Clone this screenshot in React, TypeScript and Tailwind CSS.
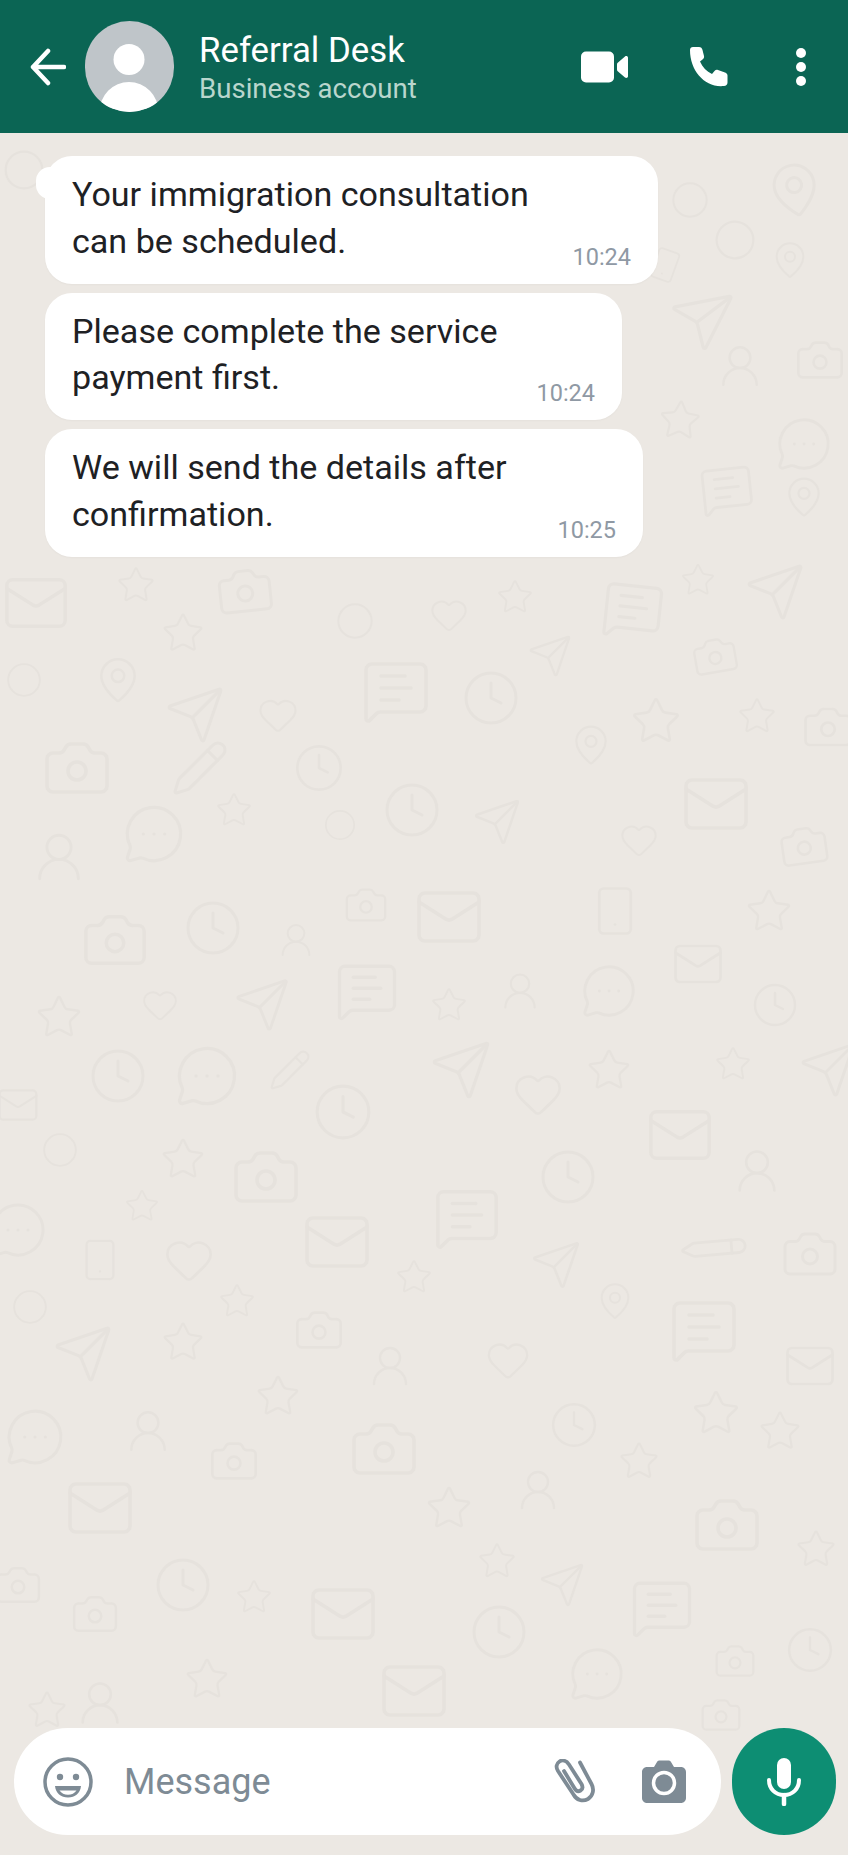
import React from 'react';
import { Camera, Clock, Heart, Mail, MapPin, MessageCircleMore, MessageSquareText, Pencil, Send, Smartphone, Star, UserRound, Circle } from 'lucide-react';

const FONT = 'font-["Roboto","Noto_Sans",sans-serif]';

const ICONS: Record<string, React.ComponentType<any>> = {
  star: Star,
  mail: Mail,
  send: Send,
  clock: Clock,
  heart: Heart,
  cam: Camera,
  dots: MessageCircleMore,
  chat: MessageSquareText,
  pin: MapPin,
  user: UserRound,
  phone: Smartphone,
  pen: Pencil,
  blob: Circle,
};

// doodles of the wallpaper: icon, x, y, size, rotation (centre coords in px)
const DOODLES: [string, number, number, number, number][] = [
  ['blob', 24, 170, 44, 0], ['pin', 795, 190, 60, -10], ['blob', 690, 200, 40, 0], ['blob', 735, 240, 44, 8], ['pin', 790, 260, 40, 0],
  ['phone', 665, 265, 36, 20], ['send', 700, 320, 66, 8], ['user', 740, 366, 50, 0], ['cam', 820, 360, 52, 0], ['star', 680, 420, 44, 4],
  ['dots', 804, 444, 58, 0], ['chat', 727, 490, 56, -6], ['pin', 804, 497, 44, 0], ['star', 698, 580, 36, 0], ['send', 775, 592, 62, 0],
  ['chat', 633, 610, 64, 6], ['cam', 715, 656, 48, -10], ['star', 656, 721, 52, 0], ['star', 757, 716, 40, 0], ['cam', 828, 727, 54, 0],
  ['mail', 716, 804, 72, 0], ['cam', 804, 846, 52, -8], ['heart', 639, 840, 40, 0], ['star', 769, 911, 48, 0], ['phone', 615, 911, 54, 0],
  ['mail', 698, 964, 54, 0], ['clock', 775, 1005, 48, 0], ['dots', 609, 991, 58, 0], ['user', 520, 991, 44, 0], ['star', 449, 1005, 38, 0],
  ['chat', 367, 991, 66, 0], ['send', 262, 1005, 58, 0], ['heart', 160, 1005, 38, 0], ['star', 59, 1017, 48, 0], ['cam', 115, 940, 70, 0],
  ['clock', 213, 928, 60, 0], ['user', 296, 940, 40, 0], ['cam', 366, 905, 46, 0], ['mail', 449, 917, 72, 0],
  ['mail', 36, 603, 70, 0], ['star', 136, 585, 40, 0], ['cam', 245, 591, 60, -6], ['blob', 355, 621, 40, 0],
  ['heart', 449, 615, 40, 0], ['star', 515, 597, 38, 0], ['star', 183, 633, 44, 0], ['blob', 24, 680, 38, 0], ['pin', 118, 680, 50, 0],
  ['send', 195, 715, 62, 0], ['heart', 278, 715, 42, 0], ['chat', 396, 691, 72, 0], ['clock', 491, 698, 60, 0], ['send', 550, 656, 46, 0],
  ['cam', 77, 768, 72, 0], ['pen', 200, 768, 60, 0], ['clock', 319, 768, 52, 0], ['clock', 412, 810, 60, 0], ['send', 497, 822, 50, 0],
  ['pin', 591, 745, 44, 0], ['dots', 154, 834, 64, 0], ['user', 59, 857, 58, 0], ['star', 234, 810, 38, 0], ['blob', 340, 825, 34, 0],
  ['mail', 18, 1105, 44, 0], ['clock', 118, 1076, 60, 0], ['dots', 207, 1076, 66, 0], ['pen', 290, 1070, 44, 0],
  ['clock', 343, 1112, 62, 0], ['send', 461, 1070, 64, 0], ['heart', 538, 1094, 52, 0], ['star', 609, 1070, 46, 0], ['star', 733, 1064, 38, 0],
  ['send', 828, 1070, 60, 0], ['mail', 680, 1135, 70, 0], ['clock', 568, 1177, 60, 0], ['user', 757, 1171, 52, 0], ['cam', 266, 1177, 72, 0],
  ['star', 183, 1159, 46, 0], ['blob', 60, 1150, 38, 0], ['dots', 18, 1230, 60, 0], ['star', 142, 1206, 36, 0], ['mail', 337, 1242, 72, 0],
  ['chat', 467, 1218, 70, 0], ['phone', 100, 1260, 46, 0], ['heart', 189, 1260, 52, 0], ['blob', 30, 1307, 38, 0], ['star', 414, 1277, 38, 0],
  ['send', 556, 1265, 52, 0], ['pen', 715, 1248, 56, 40], ['cam', 810, 1254, 60, 0], ['send', 83, 1354, 62, 0], ['star', 183, 1342, 44, 0],
  ['cam', 319, 1330, 52, 0], ['star', 237, 1301, 38, 0], ['chat', 704, 1330, 72, 0], ['pin', 615, 1301, 40, 0], ['mail', 810, 1366, 54, 0],
  ['heart', 508, 1360, 46, 0], ['user', 390, 1366, 48, 0], ['star', 278, 1396, 46, 0], ['dots', 35, 1437, 62, 0], ['user', 148, 1431, 50, 0],
  ['cam', 234, 1461, 52, 0], ['cam', 384, 1449, 72, 0], ['clock', 574, 1425, 50, 0], ['star', 716, 1413, 50, 0], ['star', 639, 1461, 42, 0],
  ['star', 780, 1431, 44, 0], ['mail', 100, 1508, 72, 0], ['star', 449, 1508, 48, 0], ['user', 538, 1490, 48, 0], ['cam', 727, 1525, 72, 0],
  ['star', 816, 1549, 42, 0], ['clock', 183, 1585, 60, 0], ['cam', 18, 1585, 50, 0], ['cam', 95, 1614, 50, 0], ['mail', 343, 1614, 72, 0],
  ['star', 254, 1597, 38, 0], ['star', 497, 1561, 40, 0], ['send', 562, 1585, 48, 0], ['chat', 662, 1608, 66, 0], ['clock', 499, 1632, 60, 0],
  ['cam', 735, 1661, 44, 0], ['clock', 810, 1650, 50, 0], ['star', 207, 1679, 46, 0], ['mail', 414, 1691, 72, 0], ['dots', 597, 1674, 58, 0],
  ['user', 100, 1703, 52, 0], ['cam', 721, 1715, 44, 0], ['star', 47, 1710, 42, 0],
];

function Wallpaper() {
  return (
    <svg className="absolute inset-0 w-full h-full" width="848" height="1855" fill="none">
      {DOODLES.map(([name, x, y, size, rot], i) => {
        const Icon = ICONS[name];
        return (
          <g key={i} transform={`rotate(${rot} ${x} ${y})`}>
            <Icon x={x - size / 2} y={y - size / 2} width={size} height={size} color="#e6e2dd" strokeWidth={1.2} />
          </g>
        );
      })}
    </svg>
  );
}

function Header() {
  return (
    <header className="relative z-10 h-[133px] shrink-0 flex items-center bg-[#0b6554] text-white">
      <svg className="ml-[30px] w-[36px] h-[38px]" viewBox="0 0 36 38" fill="none" stroke="white" strokeWidth="4.500" strokeLinecap="round" strokeLinejoin="round">
        <path d="M34 19H3M18 3L3 19l15 16" />
      </svg>
      <div className="ml-[19px] w-[89px] h-[91px] rounded-full bg-[#bfc5c9] overflow-hidden shrink-0">
        <svg viewBox="0 0 89 91" className="w-full h-full" fill="white">
          <circle cx="44" cy="38.500" r="15.500" />
          <ellipse cx="44" cy="91" rx="29.500" ry="30" />
        </svg>
      </div>
      <div className="ml-[25px] flex-1 min-w-0 pt-[2px]">
        <div className="text-[34.800px] leading-[40px] text-white">Referral Desk</div>
        <div className="text-[27.600px] leading-[32px] mt-[3px] text-[#b9d6cd]">Business account</div>
      </div>
      <svg className="w-[47px] h-[32px]" viewBox="0 0 47 32" fill="white">
        <rect x="0" y="0.500" width="33" height="31" rx="5" />
        <path d="M36 13.500c0-.9.3-1.500 1-2l7-6c1.200-.9 3-.3 3 1.300v18.400c0 1.600-1.800 2.200-3 1.300l-7-6c-.7-.5-1-1.100-1-2z" />
      </svg>
      <svg className="ml-[61px] w-[40px] h-[42px]" viewBox="0 0 40 42" fill="white">
        <path d="M4 1h6c2 0 3 1 3.500 3l1.500 6c.3 1.500-.2 2.500-1.500 3.500l-2.500 2c2.500 5.500 6.500 10 12 12.500l2.500-3c1-1.200 2.200-1.500 3.500-1l7 2.500c1.500.5 2.500 1.500 2.500 3v7c0 2-1.500 3.500-3.500 3.500C16 42 1 25 1 4c0-2 1.200-3 3-3z" />
      </svg>
      <div className="ml-[67px] mr-[42px] flex flex-col gap-[4px]">
        <span className="block w-[10px] h-[10px] rounded-full bg-white" />
        <span className="block w-[10px] h-[10px] rounded-full bg-white" />
        <span className="block w-[10px] h-[10px] rounded-full bg-white" />
      </div>
    </header>
  );
}

function Bubble({ text, time, width, tail }: { text: React.ReactNode; time: string; width: string; tail?: boolean }) {
  return (
    <div className={`relative ${width} rounded-[27px] bg-white pl-[27px] pt-[15px] shadow-[0_1px_2px_rgba(0,0,0,0.03)]`}>
      {tail && <div className="absolute left-[-9px] top-[11px] w-[30px] h-[32px] rounded-[14px] bg-white" />}
      <p className="relative text-[34.100px] leading-[46.500px] text-[#1e2124]">{text}</p>
      <span className="absolute right-[27px] bottom-[13px] text-[23.500px] leading-[28px] text-[#8f99a4]">{time}</span>
    </div>
  );
}

function InputBar() {
  return (
    <footer className="relative z-10 flex items-center pl-[14px] pr-[12px] pb-[20px] gap-[11px]">
      <div className="flex-1 h-[107px] rounded-[54px] bg-white flex items-center">
        <svg className="ml-[29px] w-[50px] h-[50px]" viewBox="0 0 50 50" fill="none">
          <circle cx="25" cy="25" r="23" stroke="#7e8b95" strokeWidth="3.500" />
          <circle cx="17" cy="20" r="3.200" fill="#7e8b95" />
          <circle cx="33" cy="20" r="3.200" fill="#7e8b95" />
          <path d="M12 29h26c-.6 7-6 11.500-13 11.500S12.600 36 12 29z" fill="#7e8b95" />
          <path d="M16.500 33.500h17c-1.800 2.800-5 4.200-8.500 4.200s-6.700-1.400-8.500-4.200z" fill="white" />
        </svg>
        <span className="ml-[31px] flex-1 text-[36px] leading-[40px] text-[#7e8b95]">Message</span>
        <svg className="w-[42px] h-[46px]" viewBox="0 0 42 46" fill="none" stroke="#7e8b95" strokeWidth="3.800" strokeLinecap="round" strokeLinejoin="round">
          <path d="M27 3.500 38.500 25c3 5.500 1.500 12-3.500 15-5.500 3-11.500 1-14.500-4.500L5 12c-2.500-4-1.500-7.500 1.500-9.500 3.300-2 7-.8 9.500 3L28.500 25c1.600 3 1 5.300-1 6.500-2.200 1.300-4.500.3-6-2.200L11 12" />
        </svg>
        <svg className="ml-[47px] mr-[35px] w-[44px] h-[43px]" viewBox="0 0 44 43">
          <path d="M5 7h7l3-5c.5-1 1.500-1.500 2.500-1.500h9c1 0 2 .5 2.500 1.500l3 5h7c2.800 0 5 2.200 5 5v26c0 2.800-2.200 5-5 5H5c-2.800 0-5-2.200-5-5V12c0-2.800 2.200-5 5-5z" fill="#7e8b95" />
          <circle cx="22" cy="23" r="10.500" fill="#7e8b95" stroke="white" strokeWidth="3.500" />
        </svg>
      </div>
      <div className="w-[104px] h-[107px] rounded-full bg-[#0d8e73] flex items-center justify-center shrink-0">
        <svg className="w-[34px] h-[48px]" viewBox="0 0 34 48" fill="none">
          <rect x="10" y="0" width="14" height="31" rx="7" fill="white" />
          <path d="M2 22c0 9 6.500 15 15 15s15-6 15-15" stroke="white" strokeWidth="4" strokeLinecap="round" />
          <path d="M17 37v9" stroke="white" strokeWidth="4.500" strokeLinecap="round" />
        </svg>
      </div>
    </footer>
  );
}

export default function App() {
  return (
    <div className={`relative w-[848px] h-[1855px] overflow-hidden flex flex-col bg-[#ece8e3] ${FONT}`}>
      <Wallpaper />
      <Header />
      <main className="relative flex-1 pl-[45px] pt-[23px] flex flex-col gap-[9px] [&>div]:h-[127.500px]">
        <Bubble width="w-[613px]" time="10:24" tail text={<>Your immigration consultation<br />can be scheduled.</>} />
        <Bubble width="w-[577px]" time="10:24" text={<>Please complete the service<br />payment first.</>} />
        <Bubble width="w-[598px]" time="10:25" text={<>We will send the details after<br />confirmation.</>} />
      </main>
      <InputBar />
    </div>
  );
}
